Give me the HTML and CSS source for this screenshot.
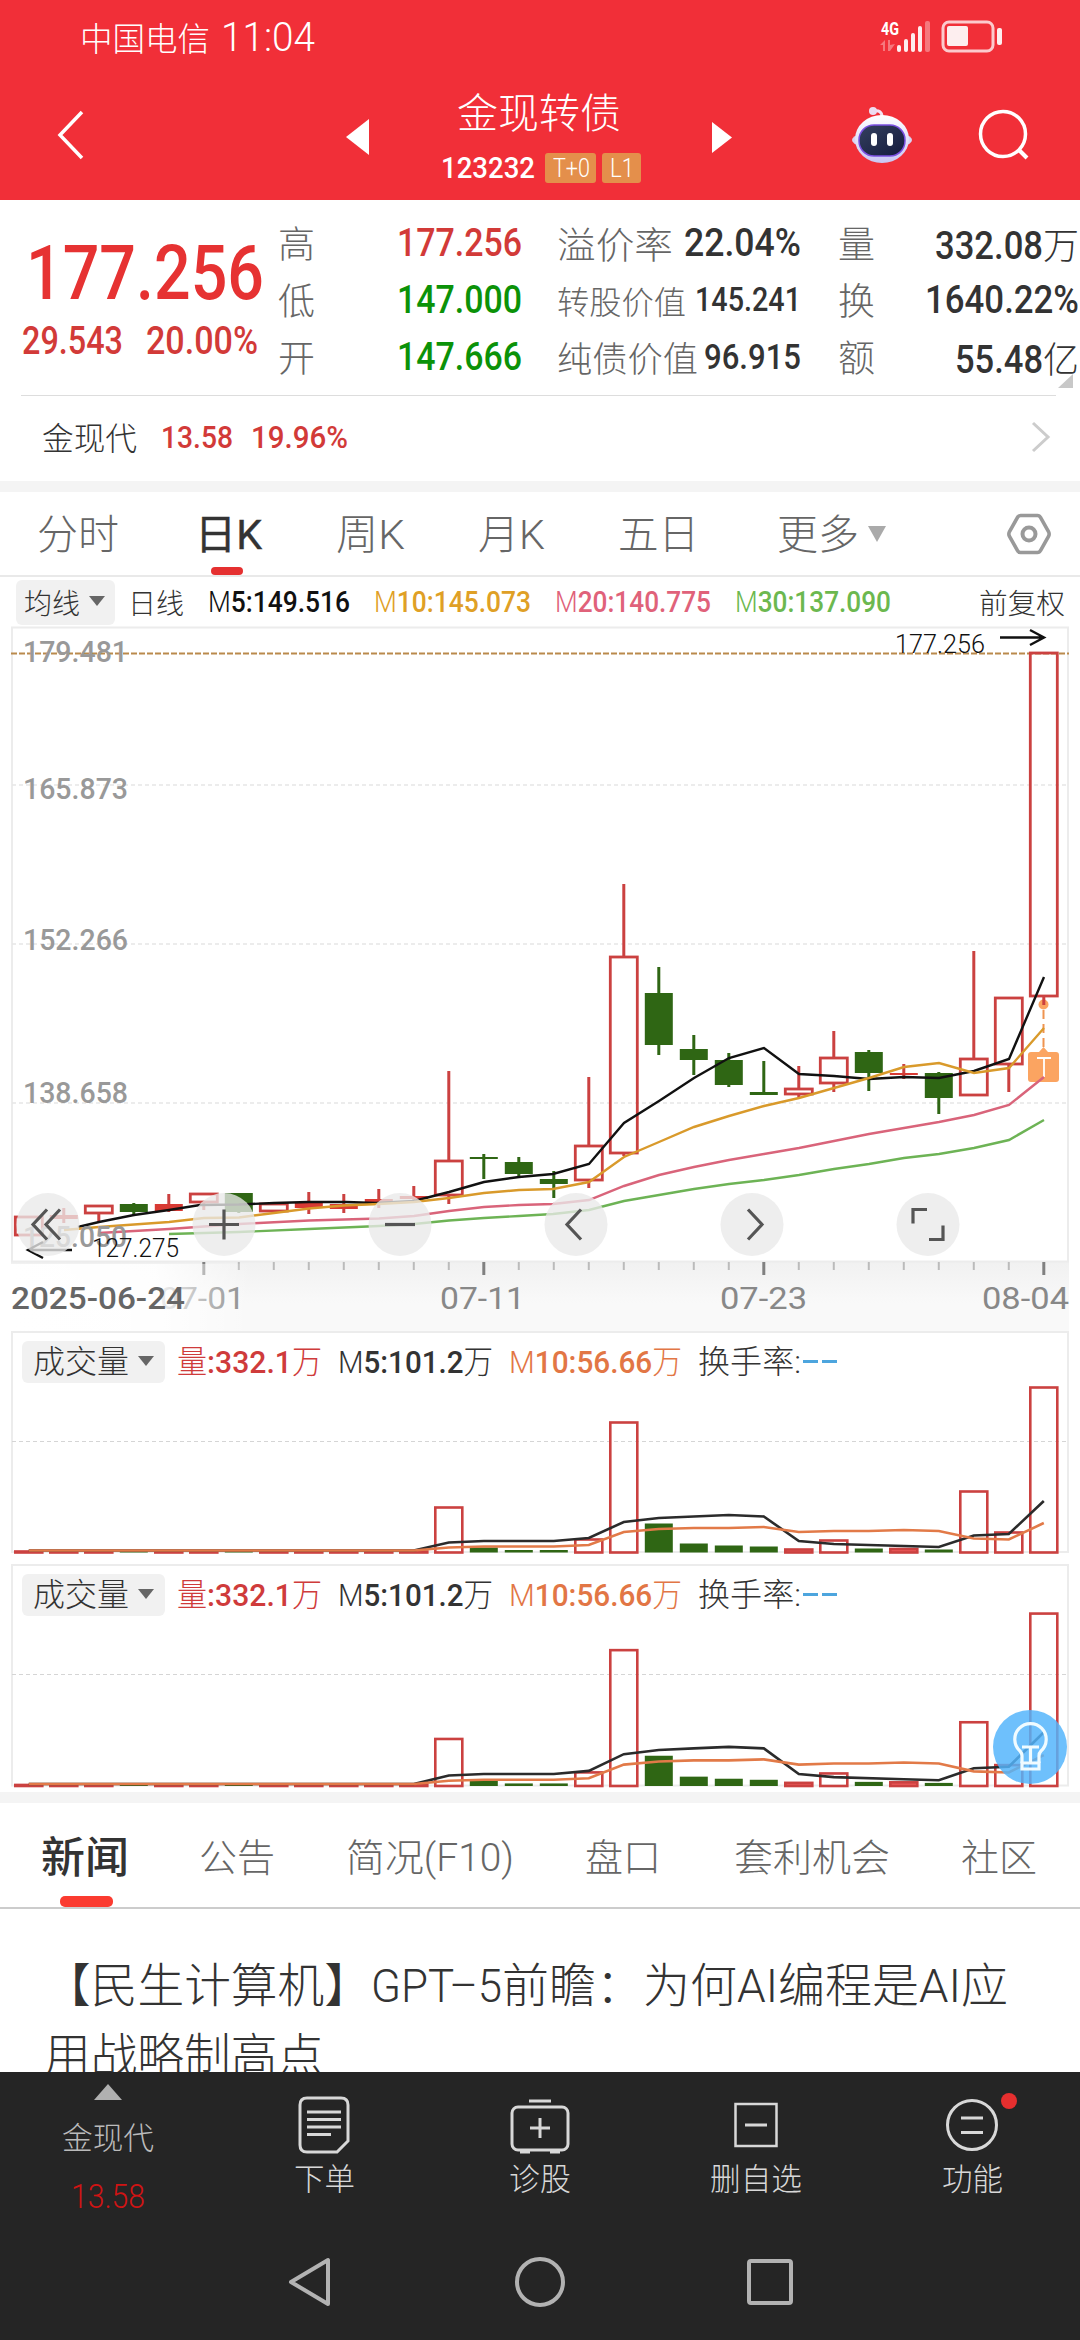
FILE: index.html
```html
<!DOCTYPE html>
<html lang="zh-CN">
<head>
  <meta charset="UTF-8">
  <title>金现转债</title>
  <link rel="stylesheet" href="styles.css">
</head>
<body>

<header class="top">
  <div class="status">
    <span class="fit carrier" data-w="130">中国电信</span>
    <span class="fit clock" data-w="94">11:04</span>
    <svg class="signal" width="124" height="36" viewBox="0 0 124 36">
      <text class="net" x="1" y="16" textLength="18" lengthAdjust="spacingAndGlyphs">4G</text>
      <g fill="#fff" opacity=".35">
        <path d="M0 26l5-5v11h-2v-6zM8 21h2v5l5-1-5 7h-2z"/>
        <rect x="45" y="2" width="5" height="31" rx="2"/>
      </g>
      <g fill="#fff" opacity=".92">
        <rect x="17" y="26" width="4" height="7" rx="2"/>
        <rect x="24" y="20" width="4" height="13" rx="2"/>
        <rect x="31" y="14" width="4" height="19" rx="2"/>
        <rect x="38" y="7" width="4" height="26" rx="2"/>
        <rect x="67" y="7" width="21" height="20" rx="2"/>
        <rect x="117" y="9" width="5" height="17" rx="2"/>
      </g>
      <rect x="63" y="3" width="50" height="29" rx="6" fill="none" stroke="#fff" stroke-opacity=".75" stroke-width="3"/>
    </svg>
  </div>
  <div class="titlebar">
    <svg class="back" width="28" height="50" viewBox="0 0 28 50"><path d="M25 2L3 25l22 23" fill="none" stroke="#fff" stroke-width="3.5"/></svg>
    <svg class="prev" width="23" height="36" viewBox="0 0 23 36"><path d="M23 0v36L0 18z" fill="#fff"/></svg>
    <div class="name">
      <div class="name-cn"><span class="fit" data-w="164">金现转债</span></div>
      <div class="code">
        <span class="fit code-num" data-w="94">123232</span>
        <span class="badge wide"><span class="fit" data-w="37">T+0</span></span>
        <span class="badge"><span class="fit" data-w="24">L1</span></span>
      </div>
    </div>
    <svg class="next" width="20" height="31" viewBox="0 0 20 31"><path d="M0 0v31l20-15.500z" fill="#fff"/></svg>
    <svg class="robot" width="62" height="58" viewBox="0 0 62 58">
      <defs>
        <linearGradient id="shell" x1="0" y1="0" x2="0" y2="1"><stop offset="0" stop-color="#fff"/><stop offset="1" stop-color="#c9c6f3"/></linearGradient>
        <linearGradient id="face" x1="0" y1="0" x2="1" y2="1"><stop offset="0" stop-color="#34405f"/><stop offset="1" stop-color="#141a3c"/></linearGradient>
      </defs>
      <path d="M31 11c0-5-3-7-8-6" fill="none" stroke="#f4e2f2" stroke-width="3"/>
      <circle cx="22" cy="5" r="4" fill="#eddcf0"/>
      <ellipse cx="31" cy="34" rx="30" ry="9" fill="#d9d4f3"/>
      <ellipse cx="31" cy="33" rx="27" ry="24" fill="url(#shell)"/>
      <rect x="8" y="19" width="46" height="31" rx="15" fill="url(#face)" stroke="#7a4fe0" stroke-width="1.500"/>
      <rect x="20" y="27" width="6" height="13" rx="3" fill="#fff"/>
      <rect x="36" y="27" width="6" height="13" rx="3" fill="#fff"/>
    </svg>
    <svg class="search" width="52" height="52" viewBox="0 0 52 52"><circle cx="25" cy="25" r="22.500" fill="none" stroke="#fff" stroke-width="3.500"/><path d="M41 41l8 8" stroke="#fff" stroke-width="4"/></svg>
  </div>
</header>

<section class="quote">
  <div class="last">
    <span class="fit price" data-w="238">177.256</span>
    <div class="change">
      <span class="fit" data-w="101">29.543</span>
      <span class="fit" data-w="112">20.00%</span>
    </div>
  </div>
  <div class="grid">
    <span class="k">高</span><span class="v up"><span class="fit" data-w="125">177.256</span></span>
    <span class="pair"><span class="k fit" data-w="116">溢价率</span><span class="v fit" data-w="117">22.04%</span></span>
    <span class="k">量</span><span class="v"><span class="fit" data-w="108">332.08</span><i>万</i></span>

    <span class="k">低</span><span class="v down"><span class="fit" data-w="125">147.000</span></span>
    <span class="pair"><span class="k fit s32" data-w="129">转股价值</span><span class="v fit s33" data-w="106">145.241</span></span>
    <span class="k">换</span><span class="v"><span class="fit" data-w="154">1640.22%</span></span>

    <span class="k">开</span><span class="v down"><span class="fit" data-w="125">147.666</span></span>
    <span class="pair"><span class="k fit s35" data-w="141">纯债价值</span><span class="v fit s36" data-w="97">96.915</span></span>
    <span class="k">额</span><span class="v"><span class="fit" data-w="88">55.48</span><i>亿</i></span>
  </div>
  <div class="corner"></div>
</section>

<section class="related">
  <span class="fit related-name" data-w="95">金现代</span>
  <span class="fit num" data-w="72">13.58</span>
  <span class="fit num" data-w="97">19.96%</span>
  <svg class="more" width="20" height="32" viewBox="0 0 20 32"><path d="M2 2l15 14L2 30" fill="none" stroke="#ccc" stroke-width="3"/></svg>
</section>

<nav class="periods">
  <span class="fit" data-w="82">分时</span>
  <span class="fit on" data-w="67">日K</span>
  <span class="fit" data-w="69">周K</span>
  <span class="fit" data-w="67">月K</span>
  <span class="fit" data-w="81">五日</span>
  <span class="fit" data-w="82">更多</span>
  <svg class="drop" width="20" height="16" viewBox="0 0 20 16"><path d="M1 0h18l-9 16z" fill="#aaa"/></svg>
  <svg class="gear" width="44" height="42" viewBox="0 0 44 42"><path d="M13.500 2.500h17q2 0 3 2l8 14q1.300 2.500 0 5l-8 14q-1 2-3 2h-17q-2 0-3-2l-8-14q-1.300-2.500 0-5l8-14q1-2 3-2z" fill="none" stroke="#999" stroke-width="3.600"/><circle cx="22" cy="21" r="6.500" fill="none" stroke="#999" stroke-width="4"/></svg>
</nav>

<div class="legend">
  <span class="pill"><span class="fit" data-w="56">均线</span><b class="tri"></b></span>
  <span class="fit l-cn" data-w="56">日线</span>
  <span class="fit l5" data-w="142">M<b>5:149.516</b></span>
  <span class="fit l10" data-w="157">M<b>10:145.073</b></span>
  <span class="fit l20" data-w="156">M<b>20:140.775</b></span>
  <span class="fit l30" data-w="156">M<b>30:137.090</b></span>
  <span class="fit fq" data-w="86">前复权</span>
</div>

<svg id="kline" width="1080" height="705" viewBox="0 626 1080 705"></svg>

<section class="volume">
  <div class="vlegend">
    <span class="pill"><span class="fit" data-w="96">成交量</span><b class="tri"></b></span>
    <span class="fit v1" data-w="145">量<b>:332.1</b>万</span>
    <span class="fit v2" data-w="155">M<b>5:101.2</b>万</span>
    <span class="fit v3" data-w="173">M<b>10:56.66</b>万</span>
    <span class="fit v4" data-w="103">换手率:</span>
    <span class="dashes"><i></i><i></i></span>
  </div>
  <svg class="bars" width="1080" height="233" viewBox="0 0 1080 233" data-base="220.5" data-scale="1"></svg>
</section>

<section class="volume second">
  <div class="vlegend">
    <span class="pill"><span class="fit" data-w="96">成交量</span><b class="tri"></b></span>
    <span class="fit v1" data-w="145">量<b>:332.1</b>万</span>
    <span class="fit v2" data-w="155">M<b>5:101.2</b>万</span>
    <span class="fit v3" data-w="173">M<b>10:56.66</b>万</span>
    <span class="fit v4" data-w="103">换手率:</span>
    <span class="dashes"><i></i><i></i></span>
  </div>
  <svg class="bars" width="1080" height="228" viewBox="0 0 1080 228" data-base="221" data-scale="1.045"></svg>
  <svg class="bulb" width="74" height="74" viewBox="0 0 74 74">
    <circle cx="37" cy="37" r="37" fill="#52b4fc" fill-opacity=".84"/>
    <g fill="none" stroke="#f0fbff" stroke-width="3.200">
      <path d="M29 53v-7q0-3-2-5a15.700 15.700 0 1 1 21 0q-2 2-2 5v7"/>
      <path d="M29 53h17v6h-17zM29 37h17M37.500 37v15"/>
    </g>
  </svg>
</section>

<nav class="news-tabs">
  <span class="fit on" data-w="88">新闻</span>
  <span class="fit" data-w="76">公告</span>
  <span class="fit" data-w="168">简况(F10)</span>
  <span class="fit" data-w="76">盘口</span>
  <span class="fit" data-w="156">套利机会</span>
  <span class="fit" data-w="76">社区</span>
</nav>

<section class="news">
  <div class="news-line"><span class="fit" data-w="327">【民生计算机】</span><span class="fit" data-w="131">GPT–5</span><span class="fit" data-w="141">前瞻：</span><span class="fit" data-w="94">为何</span><span class="fit" data-w="41">AI</span><span class="fit" data-w="141">编程是</span><span class="fit" data-w="42">AI</span><span class="fit" data-w="47">应</span></div>
  <div class="news-line"><span class="fit" data-w="280">用战略制高点</span></div>
</section>

<footer class="bottom">
  <div class="actions">
    <div class="act stock">
      <svg width="28" height="16" viewBox="0 0 28 16"><path d="M14 0l14 16H0z" fill="#b0b0b0"/></svg>
      <span class="fit lab" data-w="92">金现代</span>
      <span class="fit red" data-w="74">13.58</span>
    </div>
    <div class="act">
      <svg width="52" height="58" viewBox="0 0 52 58" fill="none" stroke="#d8d8d8" stroke-width="3">
        <path d="M9 2h34q7 0 7 7v36L39 56H9q-7 0-7-7V9q0-7 7-7z"/>
        <path d="M9 16h34M9 23.500h34M9 31h34M9 38.500h24"/>
      </svg>
      <span class="fit lab" data-w="61">下单</span>
    </div>
    <div class="act">
      <svg width="60" height="58" viewBox="0 0 60 58" fill="none" stroke="#d8d8d8" stroke-width="3">
        <rect x="2" y="11" width="56" height="43" rx="6"/>
        <path d="M19 5h22M30 22v20M20 32h20" />
        <path d="M10 56h10M40 56h10" />
      </svg>
      <span class="fit lab" data-w="62">诊股</span>
    </div>
    <div class="act">
      <svg width="44" height="58" viewBox="0 0 44 58" fill="none" stroke="#d8d8d8" stroke-width="2.500">
        <rect x="1.500" y="8" width="41" height="42"/><path d="M11 29h22" stroke-width="3"/>
      </svg>
      <span class="fit lab" data-w="92">删自选</span>
    </div>
    <div class="act">
      <svg width="54" height="58" viewBox="0 0 54 58" fill="none" stroke="#d8d8d8" stroke-width="3">
        <circle cx="27" cy="29" r="24.500"/><path d="M16 22h22M16 36.500h22"/>
      </svg>
      <span class="fit lab" data-w="61">功能</span>
      <i class="dot"></i>
    </div>
  </div>
  <div class="sysnav">
    <svg width="46" height="52" viewBox="0 0 46 52"><path d="M41 4v44L4 26z" fill="none" stroke="#b2b2b2" stroke-width="4" stroke-linejoin="round"/></svg>
    <svg width="52" height="52" viewBox="0 0 52 52"><circle cx="26" cy="26" r="23" fill="none" stroke="#b2b2b2" stroke-width="4"/></svg>
    <svg width="46" height="52" viewBox="0 0 46 52"><rect x="2" y="5" width="42" height="42" rx="2" fill="none" stroke="#b2b2b2" stroke-width="4"/></svg>
  </div>
</footer>

<script src="chart.js"></script>
</body>
</html>
```
FILE: styles.css
```css
* {
  box-sizing: border-box;
}

body {
  margin: 0;
  width: 1080px;
  height: 2340px;
  overflow: hidden;
  background: #fff;
  color: #333;
  font-family: Roboto, "Noto Sans CJK SC", sans-serif;
  font-weight: 300;
}

svg {
  display: block;
  flex: none;
}

b {
  font-weight: 500;
}

i {
  font-style: normal;
}

/* text squeezed to a set width, see chart.js */
.fit {
  display: inline-block;
  flex: none;
  white-space: nowrap;
}

/* header */
.top {
  height: 200px;
  background: #f12f38;
  color: #fff;
}

.status {
  display: flex;
  height: 74px;
  padding-left: 80px;
  align-items: center;
}

.carrier {
  font-size: 33px;
}

.clock {
  margin-left: 11px;
  font-size: 40px;
}

.signal {
  margin-left: 565px;
  overflow: visible;
}

.net {
  font-size: 19px;
  font-weight: 700;
  fill: #fff;
}

.titlebar {
  display: flex;
  height: 126px;
  align-items: center;
  padding-left: 57px;
}

.back,
.robot,
.search {
  margin-bottom: 5px;
}

.prev {
  margin-left: 261px;
}

.name {
  width: 202px;
  margin-left: 72px;
}

.name-cn {
  margin-left: 16px;
  font-size: 41px;
  line-height: 46px;
}

.code {
  display: flex;
  margin-top: 15px;
  height: 31px;
  align-items: center;
}

.code-num {
  font-size: 30px;
  font-weight: 500;
}

.badge {
  width: 39px;
  height: 30px;
  margin-left: 6px;
  padding-left: 8px;
  border-radius: 3px;
  background: #e48f4b;
  font-size: 26px;
  line-height: 30px;
}

.badge.wide {
  width: 51px;
  margin-left: 10px;
}

.next {
  margin-left: 69px;
}

.robot {
  margin-left: 119px;
}

.search {
  margin-left: 65px;
}

/* quote */
.quote {
  display: flex;
  position: relative;
  height: 196px;
}

.quote::after {
  content: "";
  position: absolute;
  left: 21px;
  right: 24px;
  bottom: 0;
  height: 1px;
  background: #ddd;
}

.last {
  width: 278px;
  padding: 33px 0 0 26px;
  color: #e63232;
}

.price {
  font-size: 76px;
  line-height: 80px;
  font-weight: 500;
}

.change {
  display: flex;
  margin: 6px 0 0 -4px;
  gap: 23px;
  color: #d23a38;
  font-size: 38px;
  line-height: 44px;
  font-weight: 500;
}

.grid {
  display: grid;
  grid-template-columns: 40px 204px 244px 39px 1fr;
  grid-template-rows: repeat(3, 57.2px);
  width: 802px;
  padding-top: 14px;
  align-items: center;
}

.k {
  color: #666;
  font-size: 37px;
}

.grid > .k {
  margin-top: -2px;
}

.v {
  color: #333;
  font-size: 39px;
  font-weight: 500;
  text-align: right;
}

.v i {
  font-size: 36px;
  font-weight: 300;
}

.pair {
  display: flex;
  justify-content: space-between;
  align-items: center;
  margin-left: 35px;
  margin-right: -35px;
}

.grid > .k:nth-child(5n + 4) {
  margin-left: 72px;
}

.grid > .v:nth-child(5n + 5) {
  padding-right: 1px;
}

.s32 { font-size: 32px; }
.s33 { font-size: 32.5px; }
.s35 { font-size: 35px; }
.s36 { font-size: 35.5px; }

.up { color: #d23a38; }
.down { color: #0b9208; }

.corner {
  position: absolute;
  left: 1058px;
  top: 174px;
  border-left: 15px solid transparent;
  border-bottom: 14px solid #c8c8c8;
}

.related {
  display: flex;
  height: 85px;
  align-items: center;
  padding: 0 29px 4px 42px;
  font-size: 32px;
}

.related-name {
  margin-top: -2px;
}

.related .num {
  margin-left: 24px;
  color: #d23a38;
  font-weight: 500;
}

.related .num + .num {
  margin-left: 18px;
}

.more {
  margin-left: auto;
}

/* period tabs */
.periods {
  display: flex;
  height: 96px;
  border-top: 11px solid #f4f4f4;
  border-bottom: 2px solid #e9e9e9;
  align-items: center;
  padding-left: 37px;
  font-size: 41px;
  color: #666;
}

.periods .fit {
  margin-right: 73px;
  padding-top: 4px;
  line-height: 79px;
}

.periods .fit.on {
  position: relative;
  margin-left: 3px;
  margin-right: 74px;
  color: #333;
  font-weight: 400;
  -webkit-text-stroke: .4px #333;
}

.periods .fit:nth-child(3) { margin-right: 73px; }
.periods .fit:nth-child(5) { margin-right: 78px; }
.periods .fit:nth-child(6) { margin-right: 8px; }

.on::after {
  content: "";
  position: absolute;
  left: 16px;
  bottom: 0;
  width: 32px;
  height: 8px;
  border-radius: 4px;
  background: #e53030;
}

.gear {
  margin-left: 120px;
}

/* moving averages */
.legend {
  display: flex;
  height: 49px;
  align-items: center;
  padding: 1px 0 0 16px;
  font-size: 29.5px;
}

.pill {
  display: flex;
  width: 99px;
  height: 45px;
  align-items: center;
  padding-left: 8px;
  border-radius: 6px;
  background: #f1f1f1;
  font-size: 28px;
}

.tri {
  margin: -2px 0 0 9px;
  border: 8px solid transparent;
  border-top: 10px solid #666;
  border-bottom: 0;
}

.l-cn { margin-left: 13px; font-size: 28px; }
.l5 { margin-left: 24px; color: #111; }
.l10 { margin-left: 24px; color: #dfa026; }
.l20 { margin-left: 24px; color: #e0627a; }
.l30 { margin-left: 24px; color: #6cb84f; }
.fq { margin-left: 88px; font-size: 28px; }

#kline text {
  font-size: 30px;
}

#kline .axis {
  fill: #999;
  font-weight: 500;
}

#kline .note {
  fill: #111;
  font-size: 25px;
}

#kline .date {
  fill: #888;
  font-size: 32px;
  font-weight: 400;
}

#kline .first {
  fill: #666;
  font-weight: 500;
}

/* volume panels */
.volume {
  position: relative;
  height: 233px;
}

.volume.second {
  height: 228px;
}

.vlegend {
  position: absolute;
  top: 10px;
  left: 22px;
  display: flex;
  height: 42px;
  align-items: center;
  font-size: 32px;
  line-height: 34px;
}

.vlegend .fit {
  margin-top: -1px;
}

.vlegend .pill {
  width: 143px;
  height: 42px;
  padding-left: 11px;
  font-size: 31.5px;
}

.vlegend .pill .fit {
  margin-top: 1px;
}

.v1 { margin-left: 12px; color: #cf3b3b; }
.v2 { margin-left: 16px; }
.v3 { margin-left: 16px; color: #e27645; }
.v4 { margin-left: 16px; }

.dashes {
  display: flex;
  gap: 4px;
  margin: -1px 0 0 2px;
}

.dashes i {
  width: 15px;
  height: 3px;
  background: #4da5de;
}

.bulb {
  position: absolute;
  left: 993px;
  top: 146px;
}

/* news */
.news-tabs {
  display: flex;
  height: 117px;
  border-top: 11px solid #f4f4f4;
  border-bottom: 2px solid #ccc;
  align-items: center;
  padding-left: 41px;
  font-size: 38px;
  color: #666;
}

.news-tabs .fit {
  margin-right: 71px;
  padding-top: 7px;
  line-height: 97px;
}

.news-tabs .fit.on {
  position: relative;
  margin-right: 70px;
  font-size: 43px;
  font-weight: 500;
  color: #333;
}

.news-tabs .on::after {
  left: 19px;
  width: 53px;
  height: 11px;
  border-radius: 5px;
  background: #fb3b30;
}

.news-tabs .fit:nth-child(4) {
  margin-right: 73px;
}

.news {
  height: 163px;
  overflow: hidden;
  padding: 42px 0 0 44px;
}

.news-line {
  display: flex;
  height: 70px;
  font-size: 46.5px;
  line-height: 70px;
}

/* bottom bar */
.bottom {
  height: 268px;
  background: #252525;
  color: #d8d8d8;
}

.actions {
  display: grid;
  grid-template-columns: repeat(5, 216px);
  height: 150px;
}

.act {
  position: relative;
  display: flex;
  flex-direction: column;
  align-items: center;
  padding-top: 24px;
}

.lab {
  margin-top: 7px;
  font-size: 31px;
  line-height: 38px;
}

.stock {
  padding-top: 12px;
}

.stock .lab {
  margin-top: 20px;
  color: #bbb;
}

.red {
  margin-top: 20px;
  font-size: 33px;
  line-height: 38px;
  color: #d01414;
}

.dot {
  position: absolute;
  left: 137px;
  top: 21px;
  width: 16px;
  height: 16px;
  border-radius: 50%;
  background: #e62f2f;
}

.sysnav {
  display: flex;
  justify-content: center;
  gap: 181px;
  padding-top: 34px;
}
```
FILE: chart.js
```js
// squeeze each label to its width
document.querySelectorAll('.fit').forEach(el => {
  const w = +el.dataset.w;
  const natural = el.getBoundingClientRect().width;
  const box = document.createElement('span');
  while (el.firstChild) box.appendChild(el.firstChild);
  box.style.display = 'inline-block';
  box.style.transformOrigin = '0 50%';
  box.style.transform = `scaleX(${w / natural})`;
  el.appendChild(box);
  el.style.width = w + 'px';
  el.style.textAlign = 'left';
});

const RED = '#cb4140';
const GREEN = '#2f6614';
const step = 35;
const cx = i => 28.8 + i * step;

// [body top, body bottom, wick top, wick bottom, colour]
const candles = [
  [1216, 1235, 1216, 1235, 'r'], [1215, 1219, 1208, 1223, 'R'], [1205, 1213, 1205, 1222, 'r'],
  [1204, 1212, 1203, 1216, 'g'], [1204, 1211, 1194, 1212, 'R'], [1193, 1202, 1193, 1210, 'r'],
  [1193, 1212, 1193, 1213, 'g'], [1203, 1211, 1203, 1213, 'r'], [1203, 1208, 1192, 1214, 'R'],
  [1204, 1209, 1194, 1213, 'R'], [1199, 1202, 1189, 1208, 'R'], [1196, 1199, 1186, 1200, 'R'],
  [1160, 1195, 1071, 1204, 'r'], [1157, 1159, 1154, 1179, 'g'], [1162, 1174, 1157, 1178, 'g'],
  [1179, 1184, 1171, 1198, 'g'], [1145, 1180, 1077, 1188, 'r'], [956, 1153, 884, 1156, 'r'],
  [993, 1045, 967, 1055, 'g'], [1049, 1060, 1035, 1075, 'g'], [1060, 1085, 1053, 1087, 'g'],
  [1092, 1095, 1061, 1094, 'g'], [1088, 1094, 1066, 1097, 'r'], [1057, 1083, 1031, 1092, 'r'],
  [1052, 1073, 1050, 1091, 'g'], [1073, 1075, 1064, 1079, 'R'], [1073, 1098, 1072, 1114, 'g'],
  [1058, 1095, 951, 1095, 'r'], [997, 1064, 997, 1092, 'r'], [652, 996, 652, 1005, 'r']
];

const ma = [
  ['#111', '78,1227 99,1222 134,1215 169,1210 200,1205 239,1204.500 274,1203 309,1202 346,1202 376,1203 414,1201 449,1192 484,1182 519,1177 553,1174 589,1164 624,1123 659,1101 694,1078 729,1058 764,1048 799,1074 834,1076 869,1079 904,1077 939,1078 974,1071 1009,1059 1044,977'],
  ['#d99a2b', '64,1230 99,1227 169,1222 204,1218 239,1217.500 274,1213 309,1208.500 344,1205.500 379,1204 414,1202 449,1198 484,1193 519,1190 553,1189 589,1182 624,1157 659,1142 694,1127 729,1116 764,1106 799,1098 834,1088 869,1078 904,1067 939,1063 974,1073 1009,1068 1044,1028'],
  ['#d9647a', '99,1233 134,1231 169,1229 239,1224 309,1220.500 379,1218.500 414,1216 449,1211 484,1207 519,1205 553,1204 589,1200 624,1186 659,1175 694,1167 729,1160 764,1154 799,1148 834,1141 869,1134 904,1128 939,1122 974,1115 1009,1105 1044,1077'],
  ['#6db355', '169,1234 239,1232 309,1229 379,1226 414,1224 449,1220.500 484,1218 519,1216 553,1214 589,1210 624,1201 659,1195 694,1189 729,1184 764,1180 799,1175 834,1169 869,1164 904,1158 939,1154 974,1148 1009,1140 1044,1120']
];

const text = (cls, x, y, w, s) =>
  `<text class="${cls}" x="${x}" y="${y}" textLength="${w}" lengthAdjust="spacingAndGlyphs">${s}</text>`;

function drawKline() {
  let s = `<defs>
    <linearGradient id="band" x1="0" y1="0" x2="0" y2="1"><stop offset="0" stop-color="#f1f1f1"/><stop offset=".6" stop-color="#f9f9f9"/></linearGradient>
    <linearGradient id="fade"><stop offset="0" stop-color="#fff"/><stop offset=".6" stop-color="#fff" stop-opacity=".9"/><stop offset="1" stop-color="#fff" stop-opacity="0"/></linearGradient>
  </defs>
  <rect x="11" y="1262" width="1058" height="69" fill="url(#band)"/>
  <rect x="12" y="627.500" width="1056" height="634" fill="#fff" stroke="#ececec" stroke-width="2"/>`;
  [785, 944, 1103].forEach(y => {
    s += `<path d="M12 ${y}H1068" stroke="#e6e6e6" stroke-width="1.500" stroke-dasharray="4 3"/>`;
  });
  s += `<path d="M11 653.500H1069" stroke="#ba8a4c" stroke-width="2" stroke-dasharray="6 2"/>`;

  for (let i = 5; i < 30; i++) {
    const big = (i - 5) % 8 === 0;
    s += `<path d="M${cx(i)} 1262v${big ? 13 : 8}" stroke="${big ? '#808080' : '#bbb'}" stroke-width="${big ? 3 : 2}"/>`;
  }
  s += text('date', 160, 1309, 85, '07-01') +
    `<rect x="11" y="1264" width="240" height="67" fill="url(#fade)"/>` +
    text('date', 440, 1309, 85, '07-11') + text('date', 720, 1309, 87, '07-23') +
    text('date', 982, 1309, 87, '08-04') + text('date first', 11, 1309, 174, '2025-06-24');

  // trade marker under the last candle
  s += `<circle cx="1043.500" cy="1004.500" r="5" fill="#fba461"/>
    <path d="M1043.500 1010v38" stroke="#ef9450" stroke-width="2" stroke-dasharray="9 5"/>
    <path d="M1031 1052h8l4.500-5 4.500 5h8q3 0 3 3v24q0 3-3 3h-25q-3 0-3-3v-24q0-3 3-3z" fill="#fba461"/>
    <path d="M1037 1058h14M1044 1058v19" stroke="#fff" stroke-width="1.800"/>`;

  candles.forEach(([t, b, wt, wb, c], i) => {
    const x = cx(i);
    const col = c === 'g' ? GREEN : RED;
    s += `<path d="M${x} ${wt}V${t}M${x} ${b}V${wb}" stroke="${col}" stroke-width="3"/>`;
    s += c === 'r'
      ? `<rect x="${x - 13.5}" y="${t + 1}" width="27" height="${b - t - 1}" fill="none" stroke="${col}" stroke-width="2.800"/>`
      : `<rect x="${x - 14}" y="${t}" width="28" height="${b - t}" fill="${c === 'R' ? '#d83a34' : col}"/>`;
  });
  ma.forEach(([c, p]) => {
    s += `<polyline points="${p}" fill="none" stroke="${c}" stroke-width="2.400"/>`;
  });

  s += text('axis', 23, 662, 105, '179.481') + text('axis', 23, 799, 105, '165.873') +
    text('axis', 23, 950, 105, '152.266') + text('axis', 23, 1103, 105, '138.658') +
    text('axis', 23, 1247, 104, '125.050');
  s += text('note', 895, 653, 90, '177.256') + text('note', 92, 1257, 87, '127.275');
  s += `<path d="M1000 637.500h43M1030 630l14 7.500-14 7.500M72 1250H30M43 1242l-15 8 15 8" fill="none" stroke="#111" stroke-width="2.400"/>`;

  const icons = [
    'M-1-15l-14 15 14 15M12-15l-14 15 14 15', 'M0-15v30M-15 0h30', 'M-15 0h30',
    'M5-15l-14 15 14 15', 'M-4-15l14 15-14 15', 'M-15-1v-14h14M15 1v14h-14'
  ];
  icons.forEach((d, i) => {
    s += `<g transform="translate(${48 + i * 176} 1224.500)"><circle r="31.500" fill="#e9e9e9" fill-opacity=".78"/><path d="${d}" fill="none" stroke="#555" stroke-width="3.200"/></g>`;
  });
  document.getElementById('kline').innerHTML = s;
}

// bar heights in px, same order as the candles
const vols = [1, 1, 1, 1, 1, 1, 1, 1, 1, 1, 1, 1, 45, 4, 1.5, 1.5, 13, 130, 28, 8, 6, 5, 3, 12, 3, 3.5, 2, 61, 20, 165];
const v5 = [[11, 1.5], [12, 9.5], [13, 11], [15, 11], [16, 14], [17, 30], [18, 34], [19, 35.5], [20, 37], [21, 35.5], [22, 11], [23, 8], [25, 6], [26, 5], [27, 16.5], [28, 18], [29, 51]];
const v10 = [[11, 1.5], [12, 4.5], [13, 5.5], [15, 5.5], [16, 7], [17, 20], [18, 23], [19, 24], [20, 24], [21, 25], [22, 20], [23, 21], [24, 21], [25, 22], [26, 21], [27, 13.5], [28, 12.5], [29, 29]];

document.querySelectorAll('.bars').forEach(svg => {
  const base = +svg.dataset.base;
  const k = +svg.dataset.scale;
  let s = `<rect x="12" y="1" width="1056" height="${base - 0.5}" fill="none" stroke="#ececec" stroke-width="2"/>
    <path d="M12 110.500H1068" stroke="#d5d5d5" stroke-width="1.200" stroke-dasharray="4 3"/>`;
  vols.forEach((v, i) => {
    const x = cx(i);
    const h = v * k;
    s += candles[i][4] === 'g'
      ? `<rect x="${x - 14}" y="${base - h}" width="28" height="${h + 1}" fill="${GREEN}"/>`
      : `<rect x="${x - 13.5}" y="${base - h + 1}" width="27" height="${h}" fill="${v < 5 && v > 1 ? '#f05a5a' : 'none'}" stroke="${RED}" stroke-width="2.600"/>`;
  });
  const line = (pts, c) => {
    const p = `${cx(0)},${base - 1} ` + pts.map(([i, v]) => `${cx(i)},${base - v * k + 0.5}`).join(' ');
    s += `<polyline points="${p}" fill="none" stroke="${c}" stroke-width="2.600"/>`;
  };
  line(v5, '#2b2b2b');
  line(v10, '#e27a48');
  svg.innerHTML = s;
});

drawKline();
```
